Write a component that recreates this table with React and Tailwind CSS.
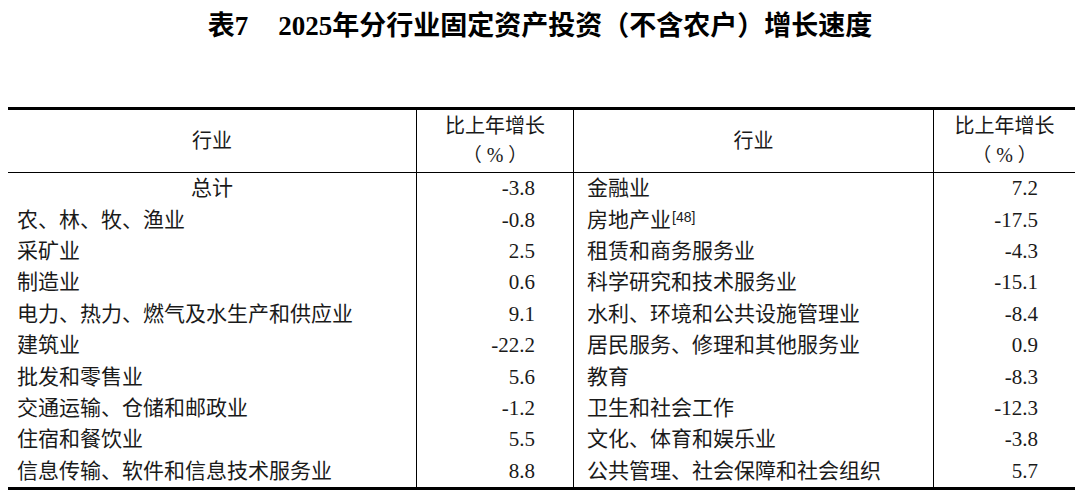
import React from 'react'

const rows = [
  { a: '总计', av: '-3.8', b: '金融业', bv: '7.2', center: true },
  { a: '农、林、牧、渔业', av: '-0.8', b: '房地产业', bv: '-17.5', note: '[48]' },
  { a: '采矿业', av: '2.5', b: '租赁和商务服务业', bv: '-4.3' },
  { a: '制造业', av: '0.6', b: '科学研究和技术服务业', bv: '-15.1' },
  { a: '电力、热力、燃气及水生产和供应业', av: '9.1', b: '水利、环境和公共设施管理业', bv: '-8.4' },
  { a: '建筑业', av: '-22.2', b: '居民服务、修理和其他服务业', bv: '0.9' },
  { a: '批发和零售业', av: '5.6', b: '教育', bv: '-8.3' },
  { a: '交通运输、仓储和邮政业', av: '-1.2', b: '卫生和社会工作', bv: '-12.3' },
  { a: '住宿和餐饮业', av: '5.5', b: '文化、体育和娱乐业', bv: '-3.8' },
  { a: '信息传输、软件和信息技术服务业', av: '8.8', b: '公共管理、社会保障和社会组织', bv: '5.7' },
]

const font = "font-['Liberation_Serif','Noto_Sans_CJK_SC',serif]"

const Pct = () => (
  <p className="font-['Noto_Sans_CJK_SC',sans-serif] text-[19px]">
    （<span className="font-['Liberation_Serif',serif] text-[20px] mx-[5px]">%</span>）
  </p>
)

const App = () => {
  return (
    <div className={`w-[1080px] h-[498px] bg-white text-[#1a1a1a] ${font}`}>
      <h1 className='pt-[10px] text-center text-[27px] leading-[32px] font-bold text-black'>
        表7<span className='inline-block w-[30px]'></span>2025年分行业固定资产投资（不含农户）增长速度
      </h1>

      <div className="mt-[65px] mx-[8px] w-[1067px] border-t-[3px] border-b-[3px] border-black">
        {/* header */}
        <div className="grid grid-cols-[408px_157px_360px_142px] h-[63px] border-b border-black text-[20px] leading-[27px]">
          <div className="flex items-center justify-center">行业</div>
          <div className="flex flex-col items-center justify-center border-l border-black">
            <p>比上年增长</p>
            <Pct />
          </div>
          <div className="flex items-center justify-center border-l border-black">行业</div>
          <div className="flex flex-col items-center justify-center border-l border-black">
            <p>比上年增长</p>
            <Pct />
          </div>
        </div>

        {/* body */}
        <div className="grid grid-cols-[408px_157px_360px_142px] text-[21px]">
          {rows.map((r, i) => (
            <React.Fragment key={i}>
              <div className={`h-[31.4px] flex items-center leading-none ${r.center ? 'justify-center' : 'pl-[9px]'}`}>
                {r.a}
              </div>
              <div className="h-[31.4px] flex items-center justify-end pr-[38px] border-l border-black leading-none">
                {r.av}
              </div>
              <div className="h-[31.4px] flex items-center pl-[13px] border-l border-black leading-none">
                {r.b}
                {r.note && (
                  <span className="text-[14px] font-['Liberation_Sans',sans-serif] -translate-y-[3px] ml-[1px]">{r.note}</span>
                )}
              </div>
              <div className="h-[31.4px] flex items-center justify-end pr-[37px] border-l border-black leading-none">
                {r.bv}
              </div>
            </React.Fragment>
          ))}
        </div>
      </div>
    </div>
  )
}

export default App
